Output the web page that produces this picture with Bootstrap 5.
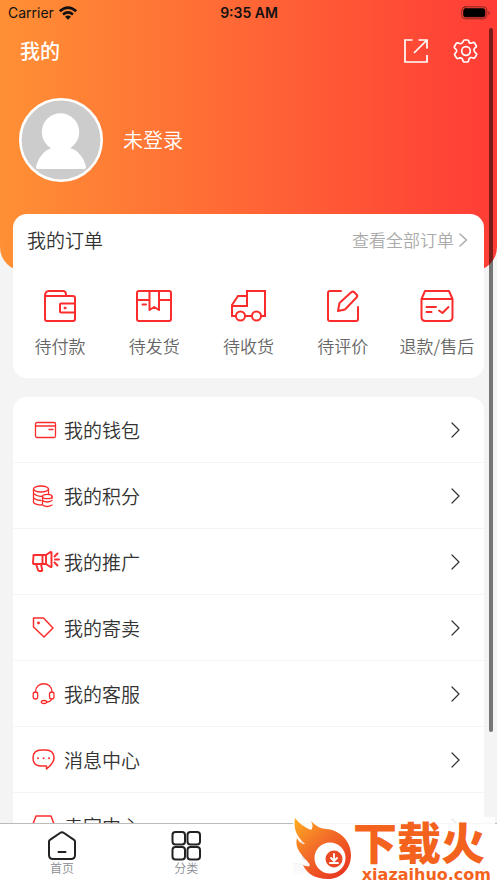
<!DOCTYPE html>
<html lang="zh-CN">
<head>
<meta charset="utf-8">
<meta name="viewport" content="width=device-width, initial-scale=1">
<title>我的</title>
<link href="https://cdn.jsdelivr.net/npm/bootstrap@5.3.0/dist/css/bootstrap.min.css" rel="stylesheet">
<style>
body{font-family:"Noto Sans CJK SC",sans-serif;font-weight:350;background:#f4f4f4;color:#333}
a{text-decoration:none;color:inherit}
svg{display:block;flex:none;fill:none;stroke:currentColor;stroke-linecap:round;stroke-linejoin:round}
.hero{background:linear-gradient(90deg,#ff9035,#ff3c36);border-radius:0 0 24px 24px;padding-bottom:75px}
.status{font:500 14px/26px Inter,sans-serif;color:#111;padding:0 7px 0 8px}
.status .carrier{font-weight:400}
.status .clock{font-weight:600}
.side{flex:1 1 0}
.title-row{height:50px;padding:0 18px 0 20px}
.title-row h1{font-size:20px;line-height:28px;font-weight:500}
.title-row button{line-height:0}
.profile{height:120px;padding:8px 19px 0;gap:20px;font-size:20px}
.face{width:84px;height:84px}
.orders{margin-top:-57px}
.panel{border-radius:14px;background:#fff;margin-left:13px;margin-right:13px}
.orders{height:164px}
.orders-head{height:51px;padding:0 16px 0 14px}
.orders-head h2{font-size:19px;line-height:28px;font-weight:350}
.orders-head a{font-size:17px;line-height:24px;color:#aaa;gap:5px}
.order-item{color:#666;font-size:17px;line-height:24px;padding-top:22px;gap:9px}
.order-item svg,.menu-item svg:first-child{color:#fb2c2c}
.menu{margin-top:19px}
.menu-item{height:66px;padding:1px 23px 0 19px;border-bottom:1px solid #f4f4f4;font-size:19px;gap:4px;color:#333}
.tabs{height:60px;border-top:1px solid #bbb;background:#fff;font-size:12px;line-height:14px;color:#8a8d93}
.tabs a{padding-top:6px}
.tabs svg{color:#222}
.thumb{right:4px;top:28px;width:4px;height:calc(100vh - 179px);border-radius:2px;background:rgba(0,0,0,.52)}
.mark-logo{right:2px;bottom:0;width:202px;height:66px;background:rgba(255,255,255,.88)}
.mark-logo svg{stroke:none}
.brand{left:60px;top:2px;font-size:44px;line-height:44px;font-weight:900;color:#f4631e}
.site{right:4px;bottom:0;font:700 16px/16px "DejaVu Sans",sans-serif;color:#f4631e}
</style>
<script src="https://cdn.jsdelivr.net/npm/bootstrap@5.3.0/dist/js/bootstrap.bundle.min.js"></script>
</head>
<body>
<div class="vh-100 d-flex flex-column overflow-hidden position-relative">
<main class="flex-grow-1 overflow-hidden">
 <header class="hero text-white">
  <div class="status d-flex align-items-center">
   <div class="side d-flex align-items-center gap-1"><span class="carrier">Carrier</span>
    <svg width="20" height="14" viewBox="0 0 20 14" stroke-width="2.6"><path d="M1.800 5.200Q10-2 18.200 5.200M5 8.500q5-4.200 10 0" stroke-linecap="butt"/><path d="M7 10.700q3-2.200 6 0L10 13.800z" fill="currentColor" stroke="none"/></svg></div>
   <span class="clock">9:35 AM</span>
   <div class="side d-flex justify-content-end"><svg width="29" height="14" viewBox="0 0 29 14"><rect x=".8" y=".8" width="25" height="12" rx="3.500" stroke-opacity=".5"/><rect x="2.800" y="2.800" width="21" height="8" rx="1.500" fill="#000" stroke="#000"/><path d="M28 5.500v3" stroke-opacity=".5"/></svg></div>
  </div>
  <div class="title-row d-flex align-items-center">
   <h1 class="m-0 me-auto">我的</h1>
   <button class="btn p-0 border-0 text-white me-4" aria-label="分享"><svg width="26" height="26" viewBox="0 0 26 26" stroke-width="1.700"><path stroke-linejoin="miter" stroke-linecap="butt" d="M9.500 2H2v22h22v-7M15.500 2H24v8.500M24 2 11 15"/></svg></button>
   <button class="btn p-0 border-0 text-white" aria-label="设置"><svg width="26" height="26" viewBox="0 0 26 26" stroke-width="1.700"><path d="M11.500 2h3q1 0 1.200 1 .4 2.500 2.600 2.200l1.700-.7q1-.4 1.600.5l1.600 2.700q.5 1-.4 1.600-3.200 1.700-.8 5l1.200 1q.8.700.3 1.600l-1.600 2.700q-.6.900-1.600.5-3.200-1.600-4.500 1.200l-.3 1.700q-.2 1-1.200 1h-3q-1 0-1.200-1-.6-3.500-3.400-3.100l-1.700.6q-1 .3-1.500-.6L1.800 17q-.5-1 .3-1.600 3-2.400.3-4.800l-.6-.5Q1 9.400 1.500 8.500L3.200 5.400q.6-.9 1.600-.5 3.400 1.500 5-.6l.5-1.300q.2-1 1.200-1z"/><circle cx="13" cy="13" r="4.300"/></svg></button>
  </div>
  <div class="profile d-flex align-items-center">
   <svg class="face" viewBox="0 0 84 84"><circle cx="42" cy="42" r="40.700" fill="#ccc" stroke="#fff" stroke-width="2.600"/><g fill="#fff" stroke="none"><circle cx="41.500" cy="34" r="18.700"/><path d="M33 50h18c8 2 14 10 16 19 0 1.500-1 2-2 2H19c-1 0-2-.5-2-2 2-9 8-17 16-19z"/></g></svg>
   <a href="#">未登录</a>
  </div>
 </header>

 <section class="panel orders position-relative">
  <div class="orders-head d-flex align-items-center justify-content-between"><h2 class="m-0">我的订单</h2>
   <a href="#" class="d-flex align-items-center">查看全部订单<svg width="9" height="14" viewBox="0 0 9 14" stroke-width="1.500"><path d="m1 1 6.500 6L1 13"/></svg></a></div>
  <div class="row row-cols-5 g-0 text-nowrap">
   <a href="#" class="col order-item d-flex flex-column align-items-center"><svg width="38" height="38" viewBox="0 0 38 38" stroke-width="2"><path d="M4 8v24q0 2 2 2h26q2 0 2-2V11q0-2-2-2H5M4 9q0-5 4-5h14q3 0 3 4M34 16.500H20q-1 0-1 1v7q0 1 1 1h14"/><circle cx="24" cy="21" r="1" fill="currentColor" stroke-width="1"/></svg>待付款</a>
   <a href="#" class="col order-item d-flex flex-column align-items-center"><svg width="38" height="38" viewBox="0 0 38 38" stroke-width="2"><rect x="2" y="4" width="34" height="30" rx="2"/><path d="M2 13h12M24 13h12M14.500 4v19l4.700-3 4.800 3V4M7.500 17.500H11"/></svg>待发货</a>
   <a href="#" class="col order-item d-flex flex-column align-items-center"><svg width="38" height="38" viewBox="0 0 38 38" stroke-width="2"><path stroke-linejoin="miter" d="M7 29H3V18l6-9h9v10H3M18 19V4h18v25h-4M16 29h7"/><circle cx="11.500" cy="29" r="4.500"/><circle cx="27.500" cy="29" r="4.500"/></svg>待收货</a>
   <a href="#" class="col order-item d-flex flex-column align-items-center"><svg width="38" height="38" viewBox="0 0 38 38" stroke-width="2"><path d="M17 4H6q-2 0-2 2v26q0 2 2 2h26q2 0 2-2V20M14 24l1.500-8L27.500 5q1.500-1 3 .5l2 2q1.500 1.500 0 3L21 22.500z"/></svg>待评价</a>
   <a href="#" class="col order-item d-flex flex-column align-items-center"><svg width="38" height="38" viewBox="0 0 38 38" stroke-width="2"><path d="M3.500 12 7 4h24l3.500 8v18q0 4-4 4h-23q-4 0-4-4zM3.500 12h31M8.500 20H18M8.500 25h5M21 23.500l3.500 2.500 6-6"/></svg>退款/售后</a>
  </div>
 </section>

 <nav class="panel menu" aria-label="服务">
  <a href="#" class="menu-item d-flex align-items-center"><svg width="28" height="28" viewBox="0 0 28 28" stroke-width="1.300"><rect x="3.500" y="6.500" width="20" height="15" rx="1.500"/><path d="M3.500 10h20M17 13.500h4"/></svg><span class="me-auto">我的钱包</span><svg width="12" height="16" viewBox="0 0 12 16" stroke-width="1.200"><path d="m3 1 7 7-7 7"/></svg></a>
  <a href="#" class="menu-item d-flex align-items-center"><svg width="28" height="28" viewBox="0 0 28 28" stroke-width="1.300"><ellipse cx="9" cy="7" rx="7.500" ry="3"/><path d="M1.500 7v13.500q2.500 2.500 8 2.500M1.500 11.500q4 3.500 8.500 2.700M1.500 16q3 2.500 7.500 2.500M16.500 7v4.500M10.500 14.500v8.500q4.500 3 9.500 0M10.500 18.500q4.500 3 9.500 0M20 14.500v2"/><ellipse cx="15.300" cy="14.500" rx="4.800" ry="2.200"/></svg><span class="me-auto">我的积分</span><svg width="12" height="16" viewBox="0 0 12 16" stroke-width="1.200"><path d="m3 1 7 7-7 7"/></svg></a>
  <a href="#" class="menu-item d-flex align-items-center"><svg width="28" height="28" viewBox="0 0 28 28" stroke-width="1.900"><path d="M1.500 8Q1 7 2 7h12l4.500-3q1-.3 1 .5v14q0 1-1 .5L14 16H2q-1 0-1-1zM10.500 7v9M14 7v9M4 16l2 6q.3 1 1.500 1h2q1 0 .7-1L9 16M22.500 8.500 25.500 5.500M23 11.500h4M22.500 14.500l3 3"/></svg><span class="me-auto">我的推广</span><svg width="12" height="16" viewBox="0 0 12 16" stroke-width="1.200"><path d="m3 1 7 7-7 7"/></svg></a>
  <a href="#" class="menu-item d-flex align-items-center"><svg width="28" height="28" viewBox="0 0 28 28" stroke-width="1.500"><path d="M1.500 4h10L21 14l-9 9L1.500 13z"/><circle cx="6.500" cy="9" r=".7" fill="currentColor"/></svg><span class="me-auto">我的寄卖</span><svg width="12" height="16" viewBox="0 0 12 16" stroke-width="1.200"><path d="m3 1 7 7-7 7"/></svg></a>
  <a href="#" class="menu-item d-flex align-items-center"><svg width="28" height="28" viewBox="0 0 28 28" stroke-width="1.300"><path d="M3.500 12C3.500 1 20 1 20 12M19.500 19q-1 3-5 3"/><rect x="1.200" y="12" width="4.500" height="7" rx="2.200"/><rect x="17.500" y="12" width="4.500" height="7" rx="2.200"/><ellipse cx="12" cy="22" rx="2.700" ry="1.500"/></svg><span class="me-auto">我的客服</span><svg width="12" height="16" viewBox="0 0 12 16" stroke-width="1.200"><path d="m3 1 7 7-7 7"/></svg></a>
  <a href="#" class="menu-item d-flex align-items-center"><svg width="28" height="28" viewBox="0 0 28 28" stroke-width="1.500"><path d="M9.500 4h4q8.500 0 8.500 8 0 5-7.500 11V20h-5Q1 20 1 12T9.500 4z"/><path d="M6 12.200h.1M11.500 12.200h.1M17 12.200h.1" stroke-width="1.900"/></svg><span class="me-auto">消息中心</span><svg width="12" height="16" viewBox="0 0 12 16" stroke-width="1.200"><path d="m3 1 7 7-7 7"/></svg></a>
  <a href="#" class="menu-item d-flex align-items-center"><svg width="28" height="28" viewBox="0 0 28 28" stroke-width="1.500"><path d="m1 12 3-8h15l3 8v10H1z"/></svg><span class="me-auto">卖家中心</span><svg width="12" height="16" viewBox="0 0 12 16" stroke-width="1.200"><path d="m3 1 7 7-7 7"/></svg></a>
 </nav>
</main>
<nav class="tabs d-flex flex-shrink-0" aria-label="主导航">
 <a href="#" class="col-3 d-flex flex-column align-items-center"><svg width="30" height="31" viewBox="0 0 30 31" stroke-width="2"><path d="M2 11.500q0-1 1-1.600L13 3q2-1.300 4 0l10 6.900q1 .6 1 1.600V25q0 4-4 4H6q-4 0-4-4zM11.500 22h7"/></svg>首页</a>
 <a href="#" class="col-3 d-flex flex-column align-items-center"><svg width="30" height="31" viewBox="0 0 30 31" stroke-width="2"><rect x="1.500" y="2" width="12.500" height="12.500" rx="3"/><rect x="16.500" y="2" width="12.500" height="12.500" rx="3"/><rect x="1.500" y="17" width="12.500" height="12.500" rx="3"/><rect x="16.500" y="17" width="12.500" height="12.500" rx="3"/></svg>分类</a>
 <a href="#" class="col-3 d-flex flex-column align-items-center"><svg width="30" height="31" viewBox="0 0 30 31" stroke-width="2"><path d="M2 3h4v18h20M6 6h21v11H6M10 11h12"/><circle cx="9" cy="27" r="2"/><circle cx="23" cy="27" r="2"/></svg>购物车</a>
</nav>
<div class="thumb position-absolute"></div>
<div class="mark-logo position-absolute">
 <svg width="62" height="66" viewBox="0 0 62 66"><defs><linearGradient id="fire" x1="0" y1="0" x2=".8" y2="1"><stop stop-color="#ffae20"/><stop offset=".45" stop-color="#f37029"/><stop offset="1" stop-color="#e9351f"/></linearGradient></defs><path fill="url(#fire)" d="M2 1q6 8 16 12 3-3 0-9 6 7 15 8c14 1 25 12 25 26 0 14-10 24-23 24-12 0-21-5-25-14 7 3 9 1 4-4C9 38 1 31 4 21q3 6 8 6C4 20 0 12 2 1z"/><circle cx="37" cy="41" r="15.500" fill="#fff"/><circle cx="41" cy="42" r="8.500" fill="#e94a25"/><path d="M41 37v6m-3-2 3 3 3-3m-7 5h8" fill="none" stroke="#fff" stroke-width="1.800"/></svg>
 <span class="brand position-absolute text-nowrap">下载火</span>
 <span class="site position-absolute">xiazaihuo.com</span>
</div>
</div>
</body>
</html>
